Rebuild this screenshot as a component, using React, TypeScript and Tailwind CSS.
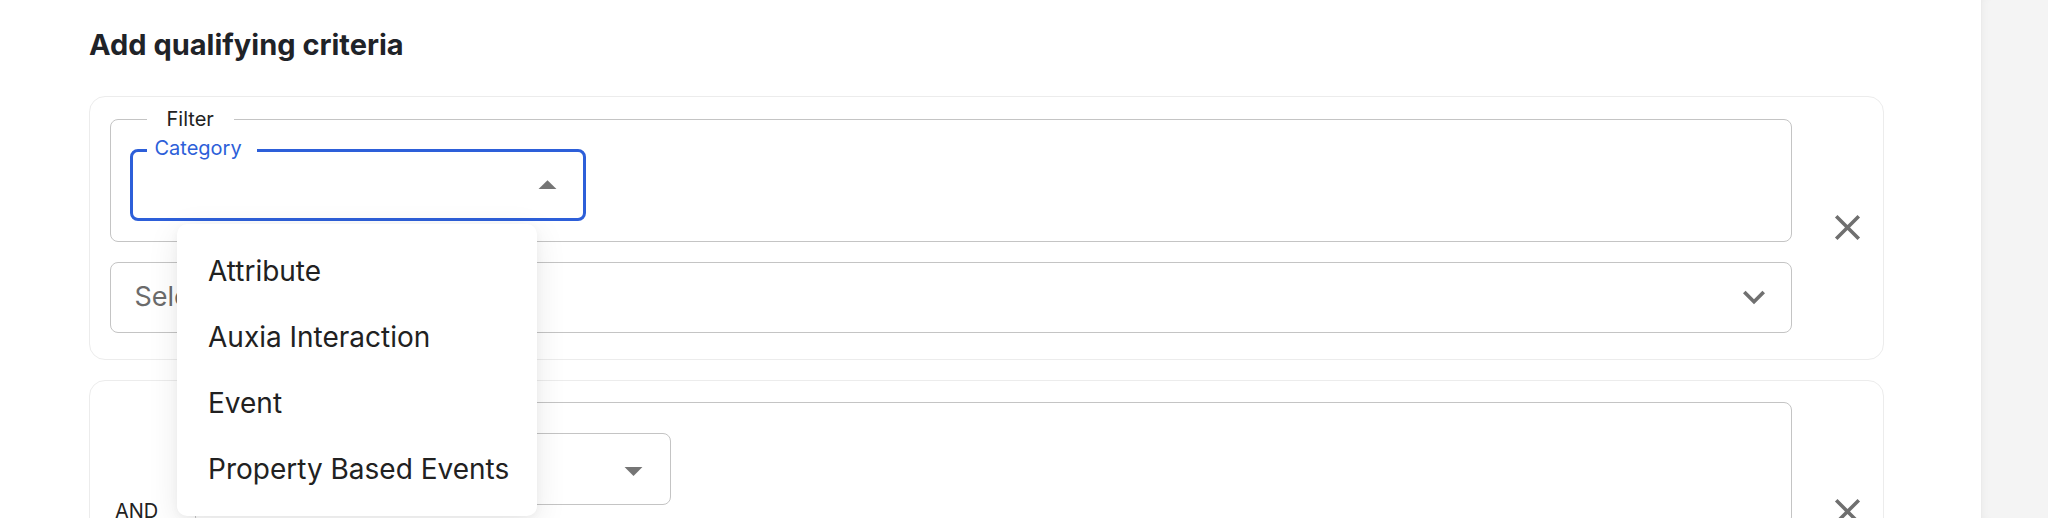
const ArrowUp = () => (
  <svg viewBox="0 0 24 24" className="h-[43px] w-[43px] fill-[#757575]">
    <path d="m7 14 5-5 5 5z" />
  </svg>
);

const ArrowDown = () => (
  <svg viewBox="0 0 24 24" className="h-[43px] w-[43px] fill-[#757575]">
    <path d="M7 10l5 5 5-5z" />
  </svg>
);

const Chevron = () => (
  <svg viewBox="0 0 24 24" className="h-[44px] w-[44px] fill-[#707070]">
    <path d="M16.59 8.59 12 13.17 7.41 8.59 6 10l6 6 6-6z" />
  </svg>
);

const CloseIcon = () => (
  <svg viewBox="0 0 24 24" className="h-[43px] w-[43px] fill-[#6f6f6f]">
    <path d="M19 6.41 17.59 5 12 10.59 6.41 5 5 6.41 10.59 12 5 17.59 6.41 19 12 13.41 17.59 19 19 17.59 13.41 12z" />
  </svg>
);

const menuItems = ["Attribute", "Auxia Interaction", "Event", "Property Based Events"];

function ValueSelect({ placeholder }: { placeholder: string }) {
  return (
    <div className="mt-[20px] flex h-[71px] items-center justify-between rounded-[8px] border-[1.5px] border-[#c4c4c4] pl-[23.5px] pr-[15px]">
      <span className="text-[27px] text-[#6b6b6b]">{placeholder}</span>
      <Chevron />
    </div>
  );
}

function CriteriaCard({ operator, focused }: { operator?: string; focused?: boolean }) {
  return (
    <div className="flex items-center rounded-[16px] border border-[#ececec] bg-white pl-[20px] pr-[14.5px]">
      {operator ? <div className="w-[85px] pl-[5px] text-[20px] text-[#222]">{operator}</div> : null}
      <div className="flex flex-1 flex-col pb-[26px] pt-[10px]">
        <fieldset className="rounded-[8px] border-[1.5px] border-[#c4c4c4] px-[18.5px] pb-[19.5px] pt-[5px]">
          <legend className="ml-[17px] px-[20px] text-[20px] leading-[24px] text-[#222]">Filter</legend>
          {focused ? (
            <fieldset className="w-[456px] rounded-[8px] border-[3px] border-[#2d5fd9]">
              <legend className="ml-[14px] pb-[4px] pl-[8px] pr-[15px] text-[20px] leading-[24px] text-[#2d5fd9]">
                Category
              </legend>
              <div className="flex h-[54px] items-center justify-end pb-[11px] pr-[13.5px]">
                <ArrowUp />
              </div>
            </fieldset>
          ) : (
            <fieldset className="w-[456px] rounded-[8px] border-[1.5px] border-[#c4c4c4]">
              <legend className="ml-[15px] pb-[4px] pl-[8px] pr-[15px] text-[20px] leading-[24px] text-[#666]">
                Category
              </legend>
              <div className="flex h-[56px] items-center justify-between pb-[11px] pl-[24px] pr-[15px]">
                <span className="text-[27px] text-[#212121]">Event</span>
                <ArrowDown />
              </div>
            </fieldset>
          )}
        </fieldset>
        <ValueSelect placeholder="Select attribute" />
      </div>
      <button className="ml-[33.5px] flex items-center justify-center">
        <CloseIcon />
      </button>
    </div>
  );
}

export default function App() {
  return (
    <div className="flex h-[518px] w-full overflow-hidden bg-white font-['Inter',sans-serif]">
      <main className="relative flex-1 pl-[89px] pr-[97px]">
        <h2 className="pt-[28px] text-[29px] font-bold leading-[34px] text-[#1f2328]">Add qualifying criteria</h2>
        <div className="mt-[34px] flex flex-col gap-[20px]">
          <CriteriaCard focused />
          <CriteriaCard operator="AND" />
        </div>

        <div className="absolute left-[177px] top-[224px] w-[360px] rounded-[10px] bg-white py-[14px] shadow-[0_8px_32px_rgba(0,0,0,0.09),0_2px_8px_rgba(0,0,0,0.04)]">
          {menuItems.map((item) => (
            <div key={item} className="flex h-[66px] items-center pl-[31px] text-[28px] text-[#212121]">
              {item}
            </div>
          ))}
        </div>
      </main>
      <aside className="w-[67px] border-l border-[#ebebeb] bg-[#f4f4f4] shadow-[inset_6px_0_8px_-6px_rgba(0,0,0,0.05)]" />
    </div>
  );
}
